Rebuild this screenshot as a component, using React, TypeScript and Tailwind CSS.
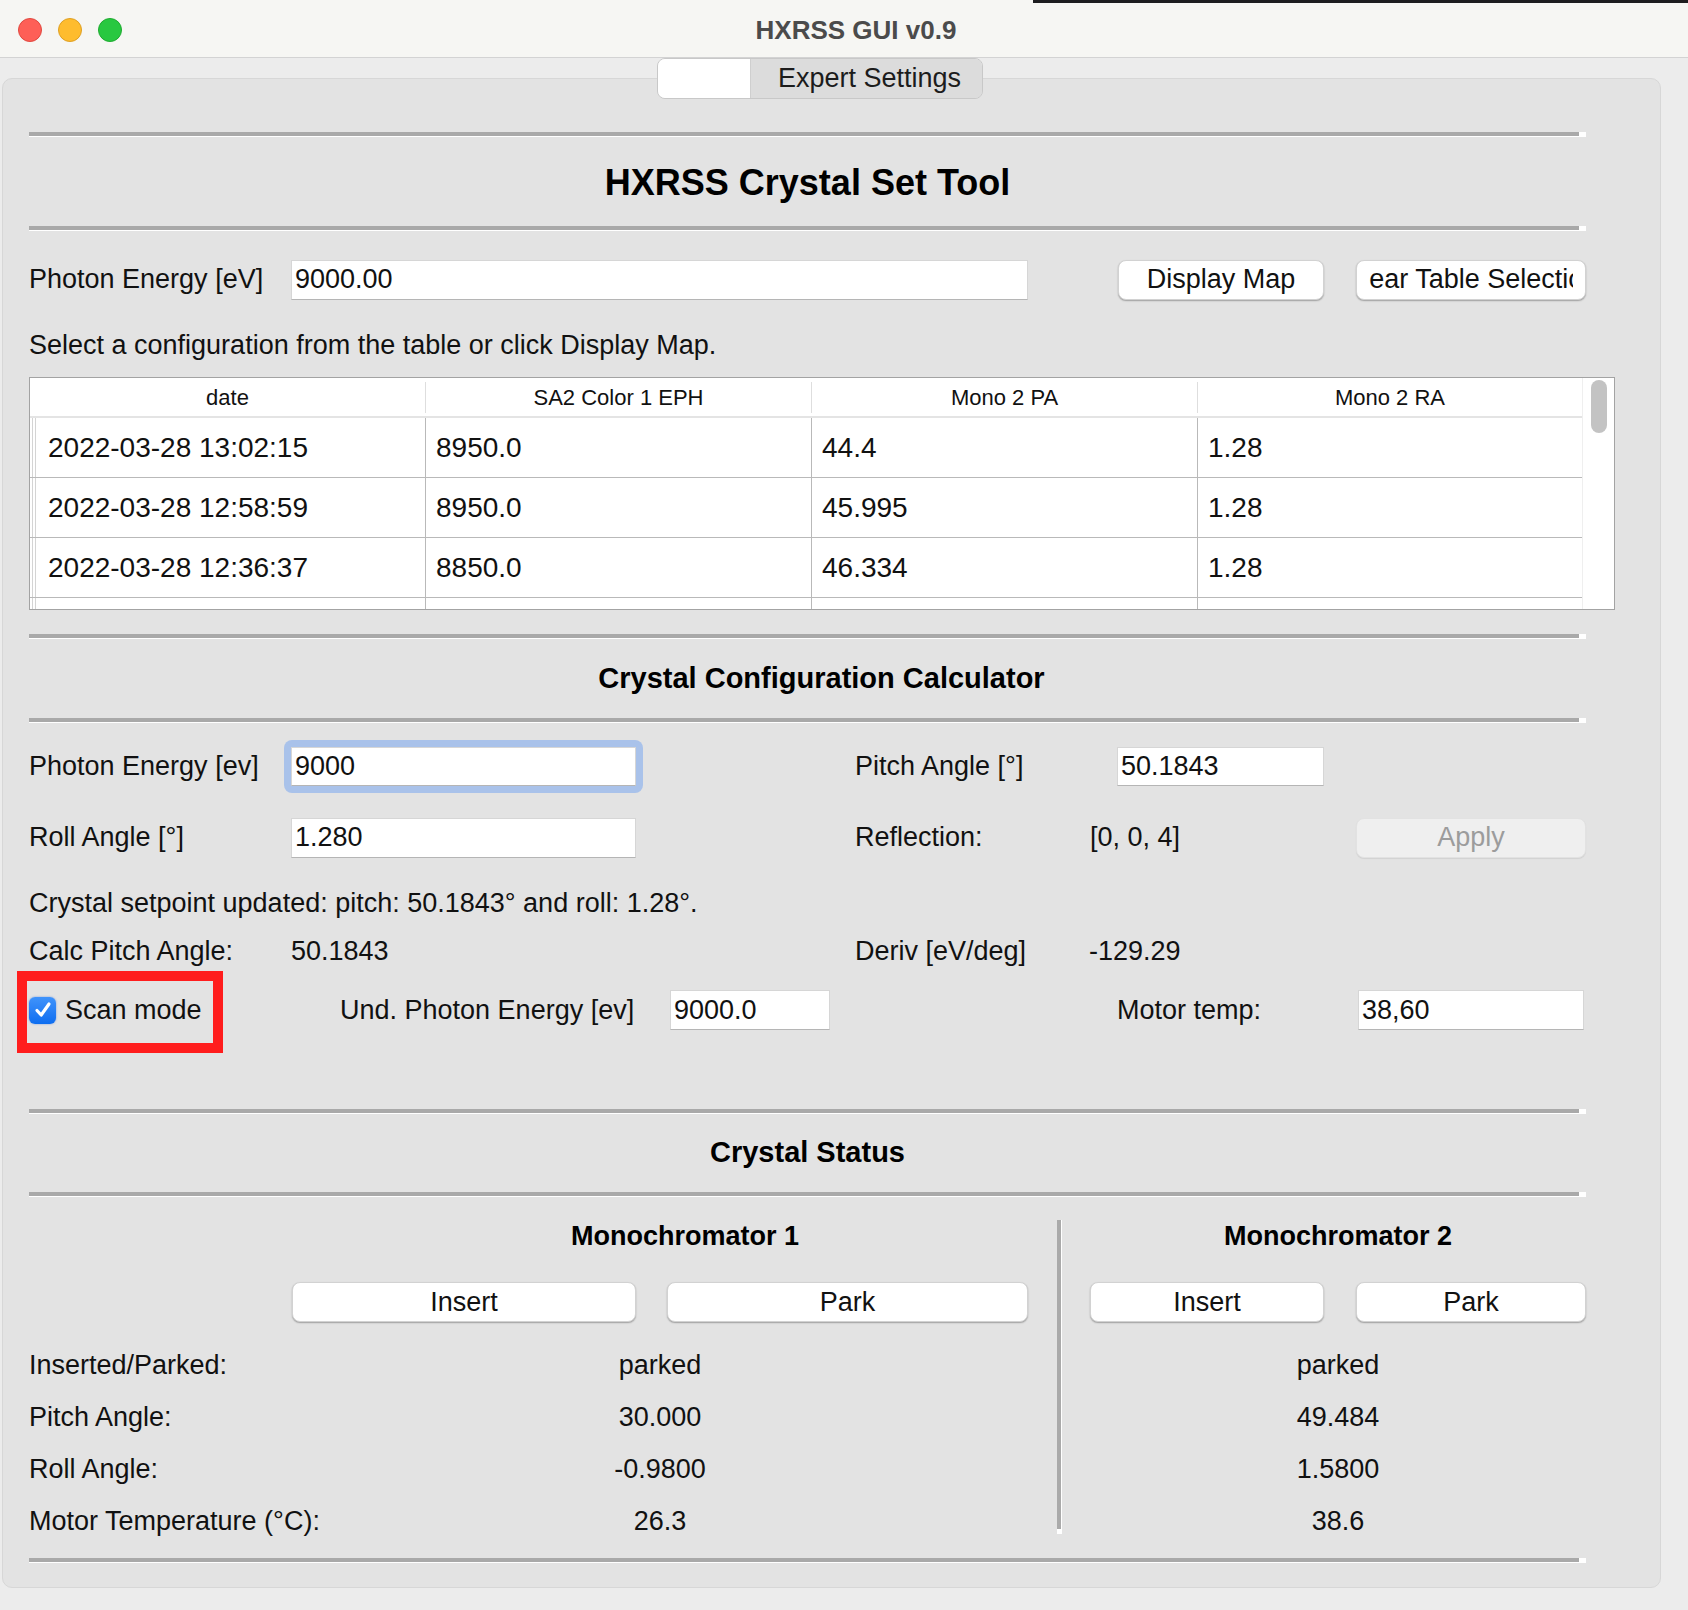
import React from 'react';

const font = "font-['Liberation_Sans',Arial,sans-serif]";

function Sep() {
  return <div className="h-[5px] w-[1557px] border-b border-r-[7px] border-white bg-[#a9a9a9]" />;
}

function Field({ value, className = '' }: { value: string; className?: string }) {
  return (
    <div
      className={`flex items-center border border-[#d6d6d6] border-b-[#b5b5b5] bg-white pl-[3px] text-[27px] text-[#111] ${className}`}
    >
      {value}
    </div>
  );
}

function Btn({ label, className = '', disabled = false }: { label: string; className?: string; disabled?: boolean }) {
  return (
    <div
      className={`flex h-[40px] items-center justify-center overflow-hidden whitespace-nowrap rounded-[8px] border px-[12px] text-[27px] ${
        disabled
          ? 'border-[#e2e2e2] bg-[#efefef] text-[#9c9c9c] shadow-[0_1px_1px_rgba(0,0,0,0.08)]'
          : 'border-[#d2d2d2] bg-white text-[#111] shadow-[0_1px_1.5px_rgba(0,0,0,0.3)]'
      } ${className}`}
    >
      <div className="flex w-full justify-center overflow-hidden">{label}</div>
    </div>
  );
}

const rows = [
  ['2022-03-28 13:02:15', '8950.0', '44.4', '1.28'],
  ['2022-03-28 12:58:59', '8950.0', '45.995', '1.28'],
  ['2022-03-28 12:36:37', '8850.0', '46.334', '1.28'],
  ['', '', '', ''],
];

function ConfigTable() {
  return (
    <div className="mt-[15px] flex h-[233px] w-[1586px] overflow-hidden border border-[#a3a3a3] bg-white">
      <div className="flex w-[1552px] flex-col">
        <div className="flex h-[40px] shrink-0 items-center border-b-2 border-[#e4e4e4] text-[22px] text-[#111]">
          <div className="w-[395px] text-center">date</div>
          <div className="h-[31px] w-px bg-[#dedede]" />
          <div className="w-[385px] text-center">SA2 Color 1 EPH</div>
          <div className="h-[31px] w-px bg-[#dedede]" />
          <div className="w-[385px] text-center">Mono 2 PA</div>
          <div className="h-[31px] w-px bg-[#dedede]" />
          <div className="w-[384px] text-center">Mono 2 RA</div>
        </div>
        {rows.map((r, i) => (
          <div key={i} className="flex h-[60px] shrink-0 border-b border-[#b9b9b9] text-[28px] text-[#111]">
            <div className="flex w-[8px] justify-between px-[2px]">
              <div className="w-px bg-[#d4d4d4]" />
              <div className="w-px bg-[#d4d4d4]" />
            </div>
            <div className="flex w-[387px] items-center pl-[10px]">{r[0]}</div>
            <div className="flex w-[386px] items-center border-l border-[#b9b9b9] pl-[10px]">{r[1]}</div>
            <div className="flex w-[386px] items-center border-l border-[#b9b9b9] pl-[10px]">{r[2]}</div>
            <div className="flex w-[385px] items-center border-l border-[#b9b9b9] pl-[10px]">{r[3]}</div>
          </div>
        ))}
      </div>
      <div className="flex w-[32px] justify-center border-l border-[#efefef] pt-[2px]">
        <div className="h-[53px] w-[16px] rounded-full bg-[#c3c3c3]" />
      </div>
    </div>
  );
}

function Checkbox() {
  return (
    <div className="flex h-[27px] w-[27px] items-center justify-center rounded-[6px] bg-gradient-to-b from-[#3f93fb] to-[#0b6df0] shadow-[0_0_2px_rgba(0,80,220,0.5)]">
      <svg width="20" height="20" viewBox="0 0 20 20" fill="none">
        <path d="M4 10.5 L8.2 15 L16 4" stroke="white" strokeWidth="3.2" strokeLinecap="round" strokeLinejoin="round" />
      </svg>
    </div>
  );
}

const status = [
  ['Inserted/Parked:', 'parked', 'parked'],
  ['Pitch Angle:', '30.000', '49.484'],
  ['Roll Angle:', '-0.9800', '1.5800'],
  ['Motor Temperature (°C):', '26.3', '38.6'],
];

export default function App() {
  return (
    <div className={`h-[1610px] w-[1688px] overflow-hidden bg-[#ececec] text-[#111] ${font}`}>
      <div className="flex h-[3px]">
        <div className="w-[1033px] bg-[#f6f6f3]" />
        <div className="flex-1 bg-[#1d1d1f]" />
      </div>
      <div className="grid h-[55px] grid-cols-[1fr_auto_1fr] items-center border-b border-[#d3d3d3] bg-[#f6f6f3]">
        <div className="flex gap-[16px] pl-[18px]">
          <div className="h-[24px] w-[24px] rounded-full border border-[#e1483f] bg-[#fe5f57]" />
          <div className="h-[24px] w-[24px] rounded-full border border-[#dfa023] bg-[#febc2e]" />
          <div className="h-[24px] w-[24px] rounded-full border border-[#1eab2f] bg-[#28c840]" />
        </div>
        <div className="pl-[24px] text-[26px] font-bold text-[#4b4b4b]">HXRSS GUI v0.9</div>
        <div />
      </div>

      <div className="relative z-10 ml-[657px] flex h-[41px] w-[326px] overflow-hidden rounded-[8px] border border-[#c8c8c8]">
        <div className="w-[93px] border-r border-[#cfcfcf] bg-white" />
        <div className="flex flex-1 items-center bg-[#dcdcdc] pl-[27px] text-[27px] text-[#1c1c1c]">Expert Settings</div>
      </div>

      <div className="-mt-[21px] ml-[2px] h-[1510px] w-[1659px] rounded-[10px] border border-[#d7d7d7] bg-[#e3e3e3] pl-[26px] pt-[53px]">
        <Sep />
        <div className="flex h-[89px] w-[1557px] items-center justify-center pt-[3px] text-[36px] font-bold text-black">
          HXRSS Crystal Set Tool
        </div>
        <Sep />

        <div className="mt-[28px] flex h-[41px] items-center text-[27px]">
          <div className="w-[262px]">Photon Energy [eV]</div>
          <Field value="9000.00" className="h-[40px] w-[737px]" />
          <Btn label="Display Map" className="ml-[90px] w-[206px]" />
          <Btn label="Clear Table Selection" className="ml-[32px] w-[230px]" />
        </div>

        <div className="mt-[28px] h-[34px] text-[27px] leading-[34px]">
          Select a configuration from the table or click Display Map.
        </div>

        <ConfigTable />

        <div className="mt-[24px]">
          <Sep />
        </div>
        <div className="flex h-[79px] w-[1557px] items-center justify-center pl-[28px] text-[29px] font-bold text-black">
          Crystal Configuration Calculator
        </div>
        <Sep />

        <div className="mt-[17px] flex h-[53px] items-center text-[27px]">
          <div className="w-[255px]">Photon Energy [ev]</div>
          <div className="w-[359px] rounded-[8px] bg-[#a9c2ea] p-[7px]">
            <Field value="9000" className="h-[39px] w-full" />
          </div>
          <div className="ml-[212px] w-[262px]">Pitch Angle [°]</div>
          <Field value="50.1843" className="h-[39px] w-[207px]" />
        </div>

        <div className="mt-[24px] flex h-[41px] items-center text-[27px]">
          <div className="w-[262px]">Roll Angle [°]</div>
          <Field value="1.280" className="h-[40px] w-[345px]" />
          <div className="ml-[219px] w-[235px]">Reflection:</div>
          <div className="w-[266px]">[0, 0, 4]</div>
          <Btn label="Apply" disabled className="w-[230px]" />
        </div>

        <div className="mt-[28px] h-[34px] text-[27px] leading-[34px]">
          Crystal setpoint updated: pitch: 50.1843° and roll: 1.28°.
        </div>

        <div className="mt-[14px] flex h-[34px] items-center text-[27px]">
          <div className="w-[262px]">Calc Pitch Angle:</div>
          <div className="w-[564px]">50.1843</div>
          <div className="w-[234px]">Deriv [eV/deg]</div>
          <div>-129.29</div>
        </div>

        <div className="relative mt-[22px] flex h-[40px] items-center text-[27px]">
          <div className="flex w-[311px] items-center">
            <Checkbox />
            <span className="ml-[9px]">Scan mode</span>
          </div>
          <div className="w-[330px]">Und. Photon Energy [ev]</div>
          <Field value="9000.0" className="h-[40px] w-[160px]" />
          <div className="ml-[287px] w-[241px]">Motor temp:</div>
          <Field value="38,60" className="h-[40px] w-[226px]" />
          <div className="absolute left-[-12px] top-[-19px] h-[82px] w-[206px] border-[10px] border-[#ff1d1d]" />
        </div>

        <div className="mt-[79px]">
          <Sep />
        </div>
        <div className="flex h-[78px] w-[1557px] items-center justify-center text-[29px] font-bold text-black">
          Crystal Status
        </div>
        <Sep />

        <div className="flex h-[361px] text-[27px]">
          <div className="w-[1028px]">
            <div className="mt-[22px] h-[34px] pl-[284px] text-center font-bold leading-[34px] text-black">
              Monochromator 1
            </div>
            <div className="mt-[29px] flex">
              <Btn label="Insert" className="ml-[263px] w-[344px]" />
              <Btn label="Park" className="ml-[31px] w-[361px]" />
            </div>
            <div className="mt-[17px]">
              {status.map((s) => (
                <div key={s[0]} className="flex h-[52px] items-center">
                  <div className="w-[263px] shrink-0 whitespace-nowrap">{s[0]}</div>
                  <div className="w-[736px] shrink-0 text-center">{s[1]}</div>
                </div>
              ))}
            </div>
          </div>
          <div className="mb-[24px] mt-[23px] w-[5px] border-b-[5px] border-r border-white bg-[#aaaaaa]" />
          <div className="w-[524px] pl-[28px]">
            <div className="mt-[22px] h-[34px] text-center font-bold leading-[34px] text-black">Monochromator 2</div>
            <div className="mt-[29px] flex">
              <Btn label="Insert" className="w-[234px]" />
              <Btn label="Park" className="ml-[32px] w-[230px]" />
            </div>
            <div className="mt-[17px]">
              {status.map((s) => (
                <div key={s[0]} className="flex h-[52px] items-center justify-center">
                  {s[2]}
                </div>
              ))}
            </div>
          </div>
        </div>
        <Sep />
      </div>
    </div>
  );
}
